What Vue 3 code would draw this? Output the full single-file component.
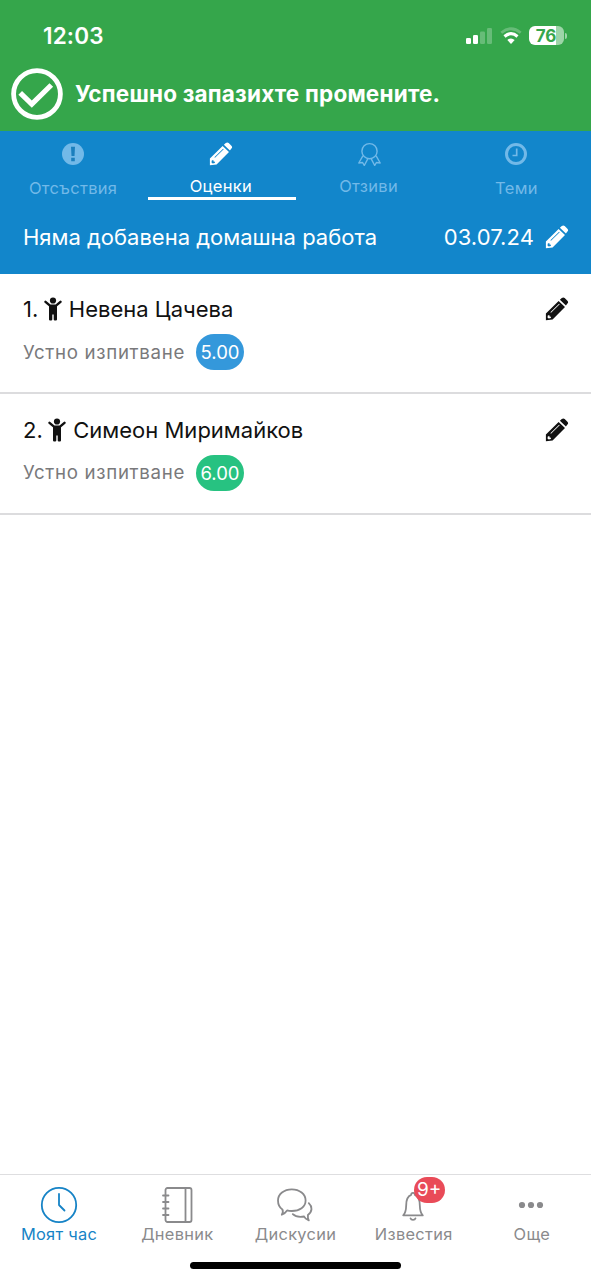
<script setup>
import { h } from 'vue'

const tabs = [
  { id: 'absences', label: 'Отсъствия' },
  { id: 'grades', label: 'Оценки', active: true },
  { id: 'reviews', label: 'Отзиви' },
  { id: 'topics', label: 'Теми' },
]

const students = [
  { no: 1, name: 'Невена Цачева', kind: 'Устно изпитване', grade: '5.00', tone: 'blue' },
  { no: 2, name: 'Симеон Миримайков', kind: 'Устно изпитване', grade: '6.00', tone: 'green' },
]

const nav = [
  { id: 'hour', label: 'Моят час', active: true },
  { id: 'diary', label: 'Дневник' },
  { id: 'chat', label: 'Дискусии' },
  { id: 'bell', label: 'Известия', badge: '9+' },
  { id: 'more', label: 'Още' },
]

const Pencil = () =>
  h('svg', { viewBox: '0 0 24 24', width: 24, height: 24 }, [
    h('path', {
      fill: 'currentColor',
      'fill-rule': 'evenodd',
      d: 'M.9 16.4 13.6 3.9l6.4 6L7.6 22.4.9 23.2zM2.8 18.4l-.3 2 1.2 1 2.1-.4.2-1.3-1.4-.2-.3-1.4zM5.4 15.2l.6.6 8.7-8.5-.6-.6z',
    }),
    h('path', {
      fill: 'currentColor',
      d: 'm14.900 2.800 1.900-1.700q1.500-1.200 2.900 0l2.700 2.600q1.400 1.400 0 2.900l-1.500 1.900z',
    }),
  ])
</script>

<template>
  <div class="screen">
    <header class="banner">
      <div class="status">
        <span class="time">12:03</span>
        <div class="indicators">
          <svg class="signal" width="27" height="18" viewBox="0 0 27 18" fill="#fff">
            <rect x="0" y="11" width="5" height="6" rx="1.3" />
            <rect x="7" y="8" width="5" height="9" rx="1.3" />
            <rect x="14" y="4.5" width="5" height="12.500" rx="1.3" opacity=".25" />
            <rect x="21" y="1" width="5" height="16" rx="1.3" opacity=".25" />
          </svg>
          <svg class="wifi" width="22" height="18" viewBox="0 0 22 18" fill="none">
            <path d="M1.300 5.800Q11-2.400 20.700 5.800" stroke="#fff" stroke-width="2.800" opacity=".25" />
            <path d="M4.500 9.400q6.500-5.400 13 0" stroke="#fff" stroke-width="3.200" />
            <path d="M7.300 12.900q3.700-3 7.400 0L11 16.900z" fill="#fff" />
          </svg>
          <div class="battery"><span>76</span></div>
          <i class="cap"></i>
        </div>
      </div>
      <div class="notice">
        <svg width="52" height="52" viewBox="0 0 52 52" fill="none" stroke="#fff">
          <circle cx="26" cy="26" r="23.400" stroke-width="4.800" />
          <path d="m9.200 24.800 11.600 11.300L40.300 17" stroke-width="5.200" />
        </svg>
        <strong>Успешно запазихте промените.</strong>
      </div>
    </header>

    <section class="toolbar">
      <nav class="tabs">
        <div v-for="t in tabs" :key="t.id" class="tab" :class="[t.id, { active: t.active }]">
          <svg v-if="t.id === 'absences'" width="24" height="24" viewBox="0 0 24 24">
            <circle cx="12" cy="12" r="11" fill="currentColor" />
            <path d="M10 4.800h4l-.5 9.200h-3zM10.200 15.800h3.600v3.400h-3.600z" fill="#1a7fbd" />
          </svg>
          <Pencil v-else-if="t.id === 'grades'" />
          <svg v-else-if="t.id === 'reviews'" width="24" height="24" viewBox="0 0 24 24" fill="none" stroke="currentColor" stroke-width="1.400" stroke-linejoin="round">
            <circle cx="12.500" cy="9.200" r="7.600" />
            <path d="M6 13.700 1.800 21l3.800-.5 1.700 3L10.900 16.600M19 13.700l4.200 7.300-3.800-.5-1.700 3L14.100 16.600" />
          </svg>
          <svg v-else width="24" height="24" viewBox="0 0 24 24" fill="none" stroke="currentColor">
            <circle cx="12" cy="12" r="9.500" stroke-width="3" />
            <path d="M12.700 6.500v7H8.500" stroke-width="1.700" />
          </svg>
          <span>{{ t.label }}</span>
        </div>
      </nav>
      <div class="homework">
        <span class="hw-title">Няма добавена домашна работа</span>
        <span class="date">03.07.24</span>
        <Pencil />
      </div>
    </section>

    <main>
      <article v-for="s in students" :key="s.no" class="student">
        <div class="row">
          <span class="no">{{ s.no }}.</span>
          <svg class="child" width="18" height="24" viewBox="0 0 18 24">
            <circle cx="9" cy="3.500" r="3.100" fill="currentColor" />
            <path d="M1.500 4.800 6 8.700h6l4.500-3.900" fill="none" stroke="currentColor" stroke-width="2.400" stroke-linecap="round" stroke-linejoin="round" />
            <path d="M5 8h8v14.500q0 1-1.100 1h-1q-1.200 0-1.200-1v-5H8.300v5q0 1-1.200 1h-1q-1.100 0-1.100-1z" fill="currentColor" />
          </svg>
          <span class="name">{{ s.name }}</span>
          <Pencil />
        </div>
        <div class="detail">
          <span>{{ s.kind }}</span>
          <b class="grade" :class="s.tone">{{ s.grade }}</b>
        </div>
      </article>
    </main>

    <footer>
      <nav class="bottom">
        <div v-for="n in nav" :key="n.id" class="item" :class="[n.id, { active: n.active }]">
          <div class="icon">
            <svg width="40" height="40" viewBox="0 0 40 40" fill="none" stroke="currentColor" stroke-width="1.800" stroke-linecap="round" stroke-linejoin="round">
              <template v-if="n.id === 'hour'">
                <circle cx="20" cy="20" r="17.200" />
                <path d="M20 9v11l5.500 5.500" />
              </template>
              <template v-else-if="n.id === 'diary'">
                <rect x="8.500" y="3" width="26" height="34" rx="2" />
                <path d="M28.500 3v34M6 10.500h5.500M6 17h5.500M6 23.500h5.500M6 30h5.500" />
              </template>
              <template v-else-if="n.id === 'chat'">
                <path d="M6.800 29.700c1-1.700 1.500-3.500.6-5.200C4.500 22.500 3 19 3 15.500 3 9 9 4.300 16.800 4.300S30.600 9 30.600 15.500 24.500 26 16.800 26c-2 0-3.500-.2-4.700-.6-1.300 1.900-2.800 3.300-5.300 4.300z" />
                <path d="M33.800 18.200c3.800 3.600 3.700 8.300-.9 11.800-.2 1.900.1 3.900.9 5.400-2.400-.8-4-2.200-4.700-3.900-5.200.9-9.300-.4-11.300-2.300" />
              </template>
              <template v-else-if="n.id === 'bell'">
                <path d="M10.200 30.300c2.800-2.600 2.900-6 3-10.100 0-5.700 1.700-9 4.900-10.300.1-2.800 3.700-2.800 3.800 0 3.200 1.300 4.900 4.600 4.900 10.300.1 4.100.2 7.500 3 10.100zM17.500 33.300c.7 2.100 4.300 2.100 5 0" />
              </template>
              <g v-else fill="currentColor" stroke="none">
                <circle cx="11" cy="20" r="3.100" />
                <circle cx="20" cy="20" r="3.100" />
                <circle cx="29" cy="20" r="3.100" />
              </g>
            </svg>
            <span v-if="n.badge" class="badge">{{ n.badge }}</span>
          </div>
          <span class="label">{{ n.label }}</span>
        </div>
      </nav>
      <i class="home"></i>
    </footer>
  </div>
</template>

<style>
body {
  margin: 0;
  background: #fff;
}
</style>

<style scoped>
.screen {
  height: 1280px;
  display: flex;
  flex-direction: column;
  overflow: hidden;
  font-family: Inter, 'Liberation Sans', sans-serif;
  font-weight: 400;
  color: #111;
}
svg {
  display: block;
  flex: none;
}
.banner {
  height: 131px;
  box-sizing: border-box;
  background: #35a64b;
  color: #fff;
}
.status {
  height: 68px;
  box-sizing: border-box;
  padding: 3px 24px 0 43px;
  display: flex;
  align-items: center;
  justify-content: space-between;
}
.time {
  font-size: 22.500px;
  font-weight: 600;
  letter-spacing: 0.15px;
}
.indicators {
  display: flex;
  align-items: center;
}
.wifi {
  margin: 0 7px;
}
.battery {
  width: 35px;
  height: 19px;
  border-radius: 6px;
  background: linear-gradient(90deg, #fff 76%, #9dd5a8 76%);
  color: #35a64b;
  font-size: 17px;
  line-height: 20px;
  font-weight: 700;
  text-align: center;
  text-indent: -1px;
}
.cap {
  width: 2px;
  height: 6px;
  margin-left: 1px;
  border-radius: 0 2px 2px 0;
  background: #9dd5a8;
}
.notice {
  display: flex;
  align-items: center;
  gap: 12px;
  padding-left: 11px;
}
.notice strong {
  font-size: 22.500px;
  font-weight: 700;
  letter-spacing: 0.2px;
  line-height: 26px;
  white-space: nowrap;
}
.toolbar {
  height: 142.500px;
  background: #1286cb;
  color: #fff;
  box-sizing: border-box;
}
.tabs {
  display: grid;
  grid-template-columns: repeat(4, 1fr);
}
.tab {
  height: 69px;
  box-sizing: border-box;
  padding: 11px 1.500px 0 0;
  display: flex;
  flex-direction: column;
  align-items: center;
  border-bottom: 3px solid transparent;
  color: #72b9e8;
  font-size: 16.500px;
  letter-spacing: 0.3px;
}
.tab span {
  line-height: 22px;
  margin-top: 11px;
}
.tab.grades span,
.tab.reviews span {
  margin-top: 9px;
}
.tab.active {
  color: #fff;
  border-color: #fff;
}
.homework {
  height: 73px;
  display: flex;
  align-items: center;
  padding: 0 22.500px 0 23px;
  font-size: 22px;
}
.hw-title {
  flex: 1;
  white-space: nowrap;
}
.date {
  margin-right: 10.500px;
  letter-spacing: 0.1px;
}
.student {
  height: 120.500px;
  box-sizing: border-box;
  border-bottom: 2px solid #dcdcde;
  padding: 21.500px 22.500px 0 23px;
}
.row {
  display: flex;
  align-items: center;
  height: 28px;
  font-size: 22px;
}
.child {
  margin: 0 7px 0 5.500px;
}
.name {
  flex: 1;
}
.detail {
  display: flex;
  align-items: center;
  gap: 11px;
  margin-top: 11px;
  font-size: 18.700px;
  color: #79797b;
}
.detail span {
  letter-spacing: 0.68px;
}
.grade {
  width: 48px;
  height: 36px;
  border-radius: 18px;
  line-height: 36px;
  text-align: center;
  font-weight: 400;
  font-size: 18.500px;
  color: #fff;
}
.grade.blue {
  background: #3498db;
}
.grade.green {
  background: #27c281;
}
footer {
  height: 106px;
  margin-top: auto;
  border-top: 1px solid #dedee0;
  box-sizing: border-box;
  display: flex;
  flex-direction: column;
  align-items: center;
}
.bottom {
  width: 100%;
  display: grid;
  grid-template-columns: repeat(5, 1fr);
}
.item {
  display: flex;
  flex-direction: column;
  align-items: center;
  padding-top: 10px;
  color: #8a8a8c;
}
.item.active {
  color: #1683c6;
}
.bell .icon,
.more .icon {
  margin-left: -2px;
}
.icon {
  position: relative;
}
.label {
  font-size: 16.400px;
  line-height: 18px;
  margin-bottom: 2px;
  letter-spacing: 0.3px;
  white-space: nowrap;
}
.badge {
  position: absolute;
  left: 21px;
  top: -8px;
  width: 31px;
  height: 26px;
  border-radius: 13px;
  background: #e94b58;
  color: #fff;
  font-size: 19px;
  line-height: 26px;
  text-align: center;
}
.home {
  width: 211px;
  height: 7px;
  border-radius: 4px;
  background: #000;
  margin-top: 17px;
}
</style>
